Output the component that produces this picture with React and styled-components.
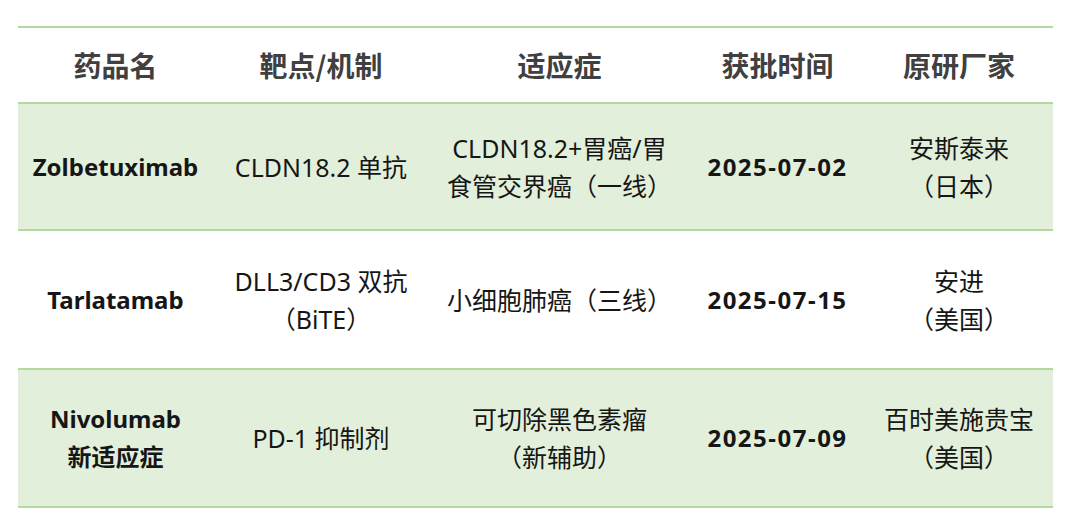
import React from "react";
import styled, { createGlobalStyle } from "styled-components";

const Global = createGlobalStyle`
  html, body { margin: 0; padding: 0; background: #ffffff; }
  body { font-family: "Noto Sans", "Noto Sans CJK SC", sans-serif; }
`;

const Page = styled.div`
  padding: 26px 27px 0 18px;
`;

const Table = styled.table`
  width: 1035px;
  border-collapse: collapse;
  table-layout: fixed;
`;

const HeadRow = styled.tr`
  height: 76px;
  border-top: 2px solid #b5d89d;
  border-bottom: 2px solid #b5d89d;
`;

const Row = styled.tr`
  height: ${(p) => p.$h}px;
  background: ${(p) => (p.$shaded ? "#e2efda" : "#ffffff")};
  border-bottom: 2px solid #b5d89d;
`;

const Th = styled.th`
  font-family: "Noto Sans CJK SC", sans-serif;
  font-size: 28px;
  font-weight: 700;
  color: #404040;
  text-align: center;
  vertical-align: middle;
  padding: 0;
`;

const Td = styled.td`
  font-family: "Noto Sans", "Noto Sans CJK SC", sans-serif;
  font-size: ${(p) => (p.$bold ? 24 : 25)}px;
  line-height: 38px;
  font-weight: ${(p) => (p.$bold ? 700 : 400)};
  color: #161616;
  text-align: center;
  vertical-align: middle;
  padding: 0;
  letter-spacing: ${(p) => (p.$spaced ? "1.5px" : "0")};
  white-space: nowrap;
`;

const cols = [195, 216, 261, 175, 188];

const rows = [
  {
    h: 127,
    shaded: true,
    cells: [
      ["Zolbetuximab"],
      ["CLDN18.2 单抗"],
      ["CLDN18.2+胃癌/胃", "食管交界癌（一线）"],
      ["2025-07-02"],
      ["安斯泰来", "（日本）"],
    ],
  },
  {
    h: 139,
    shaded: false,
    cells: [
      ["Tarlatamab"],
      ["DLL3/CD3 双抗", "（BiTE）"],
      ["小细胞肺癌（三线）"],
      ["2025-07-15"],
      ["安进", "（美国）"],
    ],
  },
  {
    h: 138,
    shaded: true,
    cells: [
      ["Nivolumab", "新适应症"],
      ["PD-1 抑制剂"],
      ["可切除黑色素瘤", "（新辅助）"],
      ["2025-07-09"],
      ["百时美施贵宝", "（美国）"],
    ],
  },
];

const headers = ["药品名", "靶点/机制", "适应症", "获批时间", "原研厂家"];

export default function App() {
  return (
    <Page>
      <Global />
      <Table>
        <colgroup>
          {cols.map((w, i) => (
            <col key={i} style={{ width: w }} />
          ))}
        </colgroup>
        <thead>
          <HeadRow>
            {headers.map((h) => (
              <Th key={h}>{h}</Th>
            ))}
          </HeadRow>
        </thead>
        <tbody>
          {rows.map((r, ri) => (
            <Row key={ri} $h={r.h} $shaded={r.shaded}>
              {r.cells.map((lines, ci) => (
                <Td key={ci} $bold={ci === 0 || ci === 3} $spaced={ci === 3}>
                  {lines.map((l, li) => (
                    <div key={li}>{l}</div>
                  ))}
                </Td>
              ))}
            </Row>
          ))}
        </tbody>
      </Table>
    </Page>
  );
}
